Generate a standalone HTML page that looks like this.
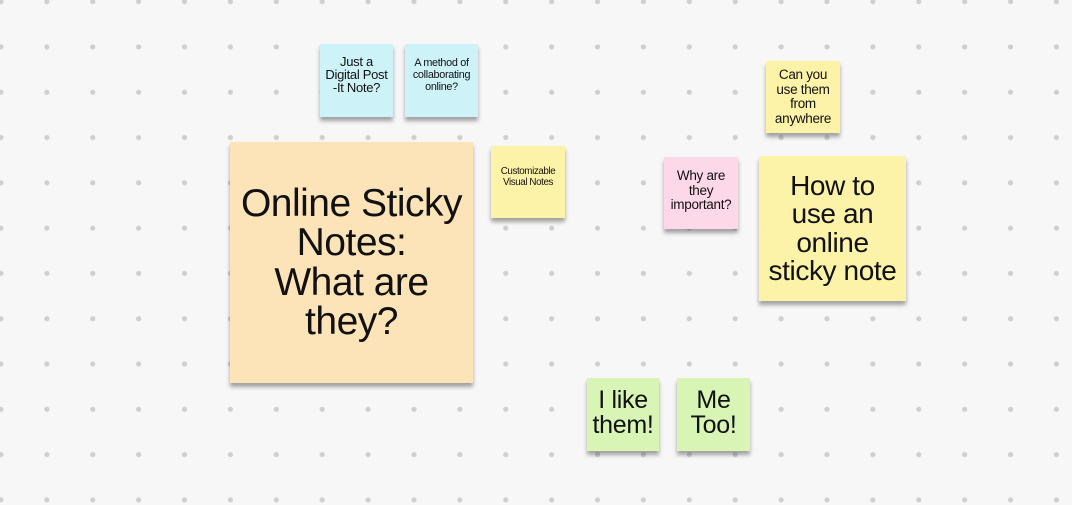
<!DOCTYPE html>
<html><head><style>
html,body{margin:0;padding:0;}
body{width:1072px;height:505px;overflow:hidden;background-color:#f7f7f7;
background-image:radial-gradient(circle,#cfcfcf 2.3px,transparent 2.8px);
background-size:45.9px 45.3px;background-position:-22px -21px;
font-family:"Liberation Sans",Arial,sans-serif;color:#111;position:relative;}
.n{position:absolute;display:flex;align-items:center;justify-content:center;text-align:center;
box-shadow:0 4px 4px rgba(0,0,0,0.35);box-sizing:border-box;padding:0;white-space:nowrap;letter-spacing:-0.3px;}
.b{background:#cdf3f8}.y{background:#fdf3a8}.o{background:#fde4b8}.p{background:#fdd8e8}.g{background:#d8f5b6}
</style></head><body>
<div class="n b" style="left:320px;top:44px;width:73px;height:73px;font-size:13px;line-height:13px;padding-bottom:12px">Just a<br>Digital Post<br>-It Note?</div>
<div class="n b" style="left:405px;top:44px;width:73px;height:73px;font-size:10.8px;line-height:12px;padding-bottom:12px">A method of<br>collaborating<br>online?</div>
<div class="n o" style="left:230px;top:142px;width:243px;height:241px;font-size:39px;line-height:39.5px;letter-spacing:-0.5px">Online Sticky<br>Notes:<br>What are<br>they?</div>
<div class="n y" style="left:491px;top:146px;width:74px;height:72px;font-size:9.8px;line-height:11px;padding-bottom:10px;letter-spacing:-0.4px">Customizable<br>Visual Notes</div>
<div class="n y" style="left:766px;top:61px;width:74px;height:72px;font-size:13.5px;line-height:14.5px">Can you<br>use them<br>from<br>anywhere</div>
<div class="n p" style="left:664px;top:157px;width:74px;height:72px;font-size:13.5px;line-height:14.5px;padding-bottom:4px">Why are<br>they<br>important?</div>
<div class="n y" style="left:759px;top:156px;width:147px;height:145px;font-size:28px;line-height:28.3px;letter-spacing:-0.4px">How to<br>use an<br>online<br>sticky note</div>
<div class="n g" style="left:587px;top:378px;width:72px;height:73px;font-size:25px;line-height:25px;padding-bottom:4px">I like<br>them!</div>
<div class="n g" style="left:677px;top:378px;width:73px;height:73px;font-size:25px;line-height:25px;padding-bottom:4px">Me<br>Too!</div>
</body></html>
